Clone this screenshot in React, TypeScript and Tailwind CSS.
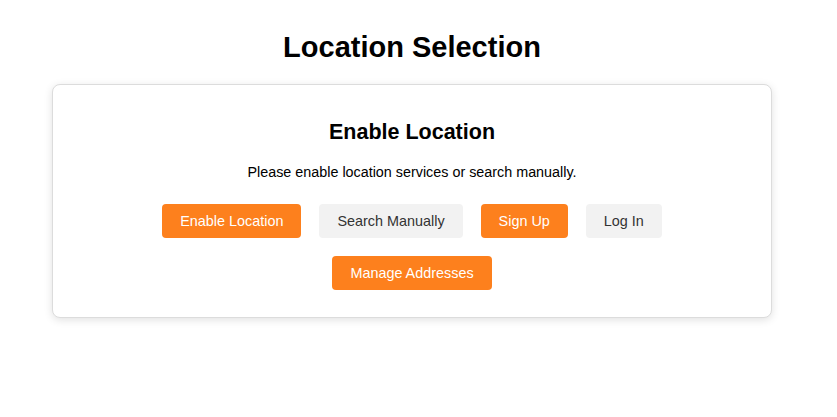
const orangeBtn =
  "h-[34px] px-[18px] rounded-[4px] bg-[#fd801d] text-white text-[14.4px] leading-none";
const grayBtn =
  "h-[34px] px-[18px] rounded-[4px] bg-[#f2f2f2] text-[#333] text-[14.4px] leading-none";

export default function App() {
  return (
    <div className="min-h-screen bg-white font-['Liberation_Sans',Arial,sans-serif] text-black">
      <div className="w-[824px] pt-[31px]">
        <h1 className="text-center text-[29px] leading-[32px] font-bold">
          Location Selection
        </h1>

        <div className="mx-auto mt-[21px] w-[720px] rounded-[8px] border border-[#dcdcdc] bg-white pt-[35px] pb-[27px] shadow-[0_2px_8px_rgba(0,0,0,0.12)]">
          <h2 className="text-center text-[21.5px] leading-[24px] font-bold">
            Enable Location
          </h2>
          <p className="mt-[20px] text-center text-[14.35px] leading-[16px]">
            Please enable location services or search manually.
          </p>

          <div className="mx-auto mt-[24px] flex w-[520px] flex-wrap justify-center gap-[18px]">
            <button className={orangeBtn}>Enable Location</button>
            <button className={grayBtn}>Search Manually</button>
            <button className={orangeBtn}>Sign Up</button>
            <button className={grayBtn}>Log In</button>
            <button className={orangeBtn}>Manage Addresses</button>
          </div>
        </div>
      </div>
    </div>
  );
}
